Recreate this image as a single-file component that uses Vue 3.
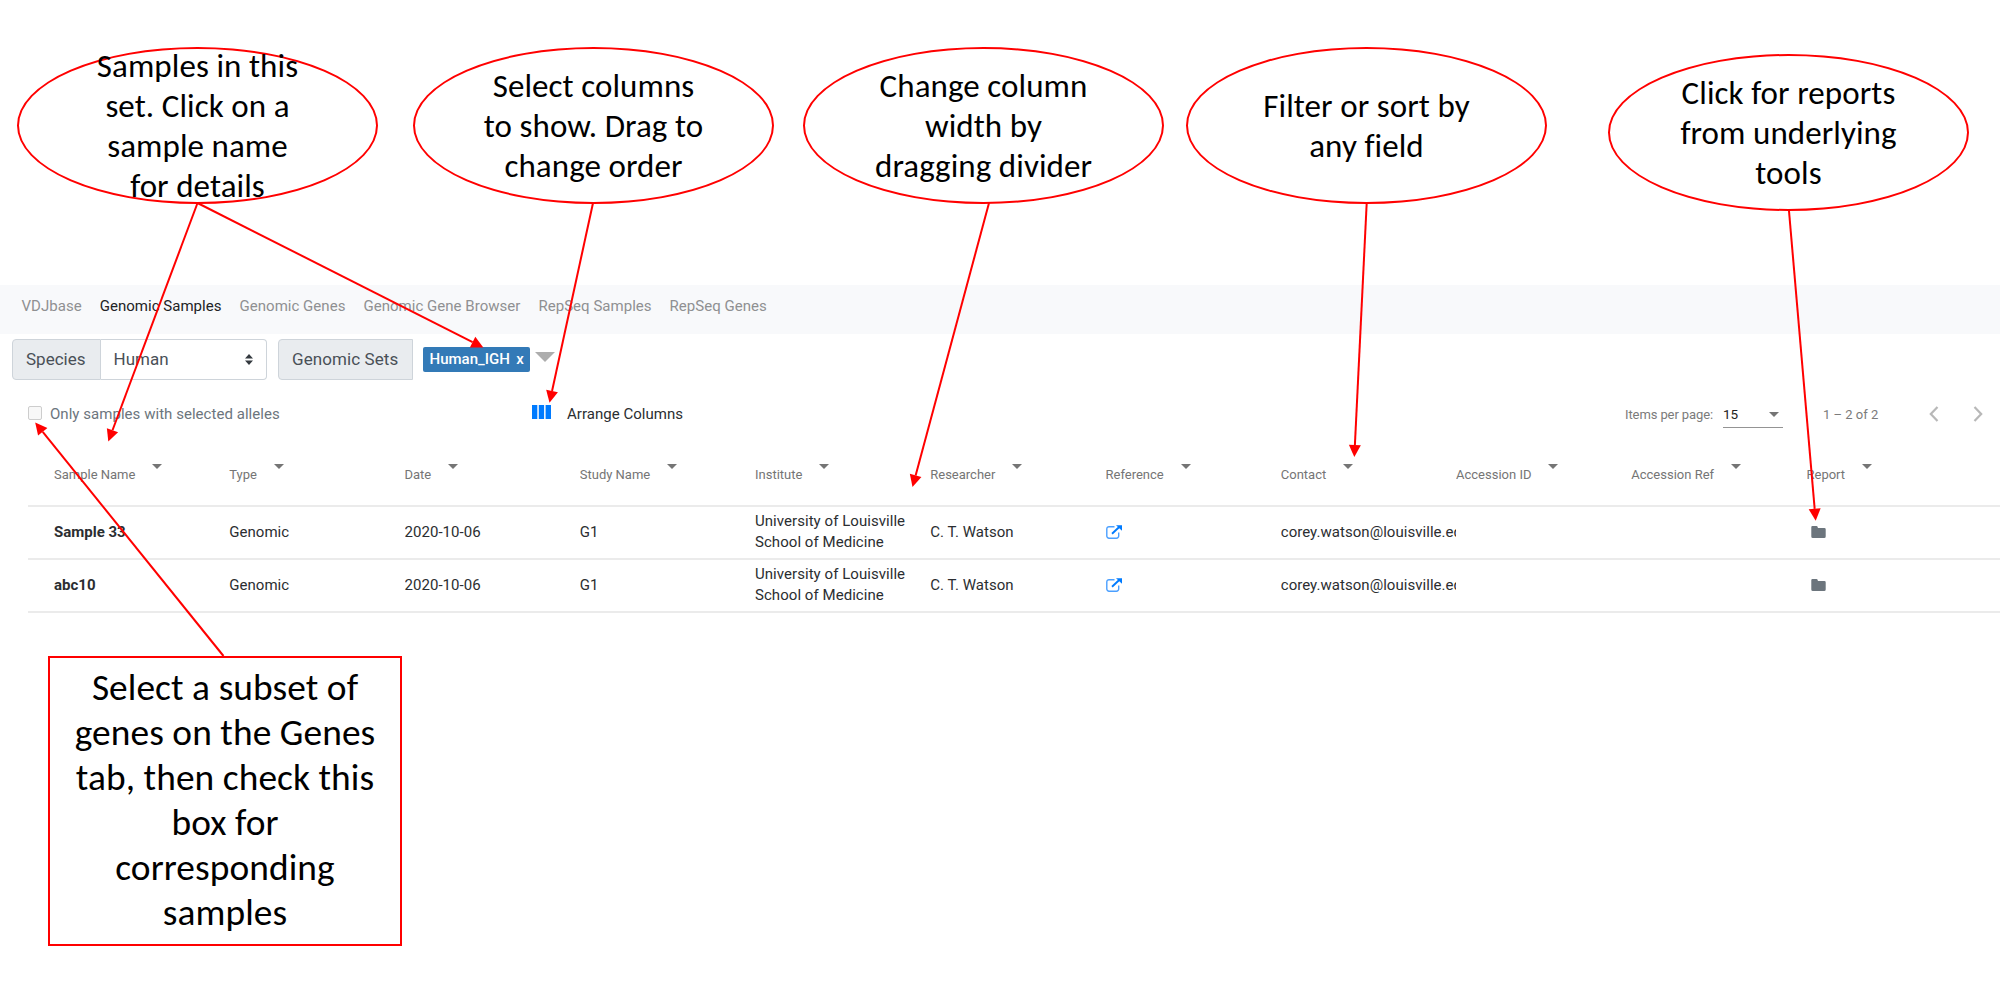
<script setup>
const tabs = ['VDJbase', 'Genomic Samples', 'Genomic Genes', 'Genomic Gene Browser', 'RepSeq Samples', 'RepSeq Genes']
const columns = ['Sample Name', 'Type', 'Date', 'Study Name', 'Institute', 'Researcher', 'Reference', 'Contact', 'Accession ID', 'Accession Ref', 'Report']
const rows = ['Sample 33', 'abc10']

const callouts = [
  { x: 17, y: 47, lines: ['Samples in this', 'set. Click on a', 'sample name', 'for details'] },
  { x: 413, y: 47, lines: ['Select columns', 'to show. Drag to', 'change order'] },
  { x: 803, y: 47, lines: ['Change column', 'width by', 'dragging divider'] },
  { x: 1186, y: 47, lines: ['Filter or sort by', 'any field'] },
  { x: 1608, y: 54, lines: ['Click for reports', 'from underlying', 'tools'] },
  { x: 48, y: 656, box: true, lines: ['Select a subset of', 'genes on the Genes', 'tab, then check this', 'box for', 'corresponding', 'samples'] },
]

const arrows = [
  [197.5, 203, 108.3, 441.5],
  [197.5, 203, 483.3, 347.5],
  [593, 203, 549.5, 402.7],
  [989, 203, 912.5, 487],
  [1366.7, 203, 1354.3, 457],
  [1789, 211, 1815.7, 520.8],
  [223.5, 656, 35.2, 422.5],
].map(([x1, y1, x2, y2]) => {
  const d = Math.hypot(x2 - x1, y2 - y1)
  const ux = (x2 - x1) / d
  const uy = (y2 - y1) / d
  const bx = x2 - ux * 12
  const by = y2 - uy * 12
  return {
    x1, y1, bx, by,
    head: `${x2},${y2} ${bx - uy * 6},${by + ux * 6} ${bx + uy * 6},${by - ux * 6}`,
  }
})
</script>

<template>
  <div class="page">
    <nav class="nav">
      <a v-for="t in tabs" :key="t" :class="{ active: t === 'Genomic Samples' }">{{ t }}</a>
    </nav>

    <div class="filters">
      <div class="group species">
        <span class="addon">Species</span>
        <span class="select">
          Human
          <svg width="8" height="11" viewBox="0 0 8 11"><path d="M4 0L8 4.6H0zM4 11L0 6.4H8z" fill="#343a40" /></svg>
        </span>
      </div>
      <span class="addon sets">Genomic Sets</span>
      <span class="tag">Human_IGH<b>x</b></span>
      <i class="caret"></i>
    </div>

    <div class="tools">
      <i class="check"></i>
      <span class="only">Only samples with selected alleles</span>
      <svg class="cols" width="19" height="14" viewBox="0 0 19 14"><path d="M0 0h5.3v14H0zM6.8 0h5.3v14H6.8zM13.6 0H19v14h-5.4z" fill="#007bff" /></svg>
      <span class="arrange">Arrange Columns</span>
      <div class="pager">
        <span class="label">Items per page:</span>
        <span class="size">15<i class="down"></i></span>
        <span class="range">1 – 2 of 2</span>
        <svg width="10" height="16" viewBox="0 0 10 16"><path d="M8.5 1L1.8 8l6.7 7" fill="none" stroke="#b8b8b8" stroke-width="2.2" /></svg>
        <svg class="next" width="10" height="16" viewBox="0 0 10 16"><path d="M1.5 1l6.7 7-6.7 7" fill="none" stroke="#b8b8b8" stroke-width="2.2" /></svg>
      </div>
    </div>

    <div class="table">
      <div class="row head">
        <div v-for="c in columns" :key="c" class="cell">{{ c }}<i class="down"></i></div>
      </div>
      <div v-for="r in rows" :key="r" class="row">
        <div class="cell name">{{ r }}</div>
        <div class="cell">Genomic</div>
        <div class="cell">2020-10-06</div>
        <div class="cell">G1</div>
        <div class="cell inst"><span>University of Louisville<br />School of Medicine</span></div>
        <div class="cell">C. T. Watson</div>
        <div class="cell">
          <svg width="16" height="14" viewBox="0 0 16 14">
            <path d="M8.5 1.7H3A2.2 2.2 0 0 0 .8 3.9V11A2.2 2.2 0 0 0 3 13.2h7.5A2.2 2.2 0 0 0 12.7 11V7.5" fill="none" stroke="#4a9fff" stroke-width="1.4" />
            <path d="M6 8.8L13.5 1.8" stroke="#007bff" stroke-width="1.9" />
            <path d="M10 .2h6v5.6z" fill="#007bff" />
          </svg>
        </div>
        <div class="cell">corey.watson@louisville.edu</div>
        <div class="cell"></div>
        <div class="cell"></div>
        <div class="cell">
          <svg class="folder" width="15" height="12" viewBox="0 0 15 12"><path d="M1.3 0h4.2q.9 0 1.2 1l.2.9h6.5q1.3 0 1.3 1.3v7.3q0 1.5-1.5 1.5H1.8Q.3 12 .3 10.5V1.2Q.3 0 1.3 0z" fill="#6c757d" /></svg>
        </div>
      </div>
    </div>

    <div class="notes">
      <svg width="2000" height="1001" viewBox="0 0 2000 1001">
        <g v-for="(a, i) in arrows" :key="i">
          <line :x1="a.x1" :y1="a.y1" :x2="a.bx" :y2="a.by" stroke="#f00" stroke-width="2" />
          <polygon :points="a.head" fill="#f00" />
        </g>
      </svg>
      <div
        v-for="(c, i) in callouts"
        :key="i"
        class="note"
        :class="{ box: c.box }"
        :style="{ left: c.x + 'px', top: c.y + 'px' }"
      >
        <div v-for="l in c.lines" :key="l">{{ l }}</div>
      </div>
    </div>
  </div>
</template>

<style>
body { margin: 0; background: #fff; overflow: hidden; }
</style>

<style scoped>
.page {
  position: relative;
  box-sizing: border-box;
  width: 2000px;
  height: 1001px;
  padding-top: 285px;
  overflow: hidden;
  font-family: Roboto, sans-serif;
  font-size: 15px;
  color: #2b2e31;
}
.page svg { flex: none; display: block; }
.nav {
  display: flex;
  align-items: center;
  gap: 18px;
  box-sizing: border-box;
  height: 49px;
  padding: 0 0 7px 21.5px;
  background: #f8f9fb;
  color: #8f9092;
  letter-spacing: .03px;
}
.nav a { white-space: nowrap; }
.nav .active { color: #222325; }
.filters {
  display: flex;
  align-items: center;
  height: 41px;
  padding: 5px 0 0 12px;
  font-size: 17px;
  color: #495057;
}
.group { display: flex; }
.species { width: 255px; margin-right: 11px; }
.addon, .select {
  display: flex;
  align-items: center;
  box-sizing: border-box;
  height: 41px;
  padding: 0 13px 1px 13px;
  border: 1px solid #ced4da;
}
.addon { background: #e9ecef; border-radius: 4px 0 0 4px; }
.species .addon { width: 89px; }
.select {
  flex: 1;
  justify-content: space-between;
  padding-left: 12.5px;
  border-left: 0;
  border-radius: 0 4px 4px 0;
}
.sets { width: 135px; letter-spacing: .08px; }
.tag {
  box-sizing: border-box;
  width: 107px;
  height: 25px;
  margin-left: 10px;
  padding: 0 0 0 6.5px;
  border-radius: 2px;
  background: #337ab7;
  color: #fff;
  font-size: 15px;
  font-weight: 500;
  line-height: 24px;
}
.tag b { margin-left: 6.5px; font-weight: 500; }
.caret {
  margin: -6px 0 0 5px;
  border: 10px solid transparent;
  border-top-color: #adadad;
  border-bottom: 0;
}
.tools {
  display: flex;
  align-items: center;
  height: 66px;
  padding-left: 28px;
}
.check {
  box-sizing: border-box;
  width: 14px;
  height: 14px;
  border: 1px solid #cdcdcd;
  border-radius: 2px;
  background: #f8f8f8;
}
.only { width: 482px; margin: 1px 0 0 8px; color: #6c757d; letter-spacing: .04px; }
.cols { margin-top: -2px; }
.arrange { margin: 1px 0 0 16px; letter-spacing: .03px; }
.pager {
  display: flex;
  align-items: center;
  margin: 2px 0 0 auto;
  padding-right: 17px;
  font-size: 13px;
  color: #7b7b7b;
}
.label { width: 98px; letter-spacing: -.1px; }
.size {
  display: flex;
  align-items: center;
  justify-content: space-between;
  box-sizing: border-box;
  width: 60px;
  height: 28px;
  padding-right: 4px;
  border-bottom: 1px solid #949494;
  font-size: 13.5px;
  color: #222;
}
.size .down { margin-top: 1px; }
.range { width: 106px; margin-left: 40px; }
.next { margin-left: 34px; }
.down {
  border: 5px solid transparent;
  border-top-color: #757575;
  border-bottom: 0;
}
.table { margin-left: 28px; }
.row {
  display: flex;
  align-items: center;
  box-sizing: border-box;
  width: 1972px;
  height: 53px;
  padding: 0 0 1px 26px;
  border-bottom: 2px solid #ebebeb;
  letter-spacing: .04px;
}
.head { height: 61px; font-size: 13px; color: #757575; letter-spacing: 0; }
.head .cell { display: flex; align-items: center; height: 44px; padding-bottom: 2px; }
.head .down { margin: -15px 0 0 17px; }
.cell {
  flex: 0 0 175.25px;
  overflow: hidden;
  white-space: nowrap;
}
.head .cell { box-sizing: border-box; }
.cell:last-child { flex: 1; }
.name { font-weight: 700; letter-spacing: 0; }
.inst { line-height: 21.5px; letter-spacing: .05px; }
.folder { margin-left: 4.5px; }
.notes { position: absolute; inset: 0; }
.note {
  position: absolute;
  display: flex;
  flex-direction: column;
  align-items: center;
  justify-content: center;
  box-sizing: border-box;
  width: 361px;
  height: 157px;
  border: 2px solid #f00;
  border-radius: 50%;
  font: 33px/40px Carlito, Calibri, sans-serif;
  letter-spacing: .07px;
  color: #000;
  white-space: nowrap;
}
.note.box {
  width: 354px;
  height: 290px;
  padding-bottom: 2px;
  border-radius: 0;
  font-size: 37.4px;
  line-height: 45px;
}
</style>
